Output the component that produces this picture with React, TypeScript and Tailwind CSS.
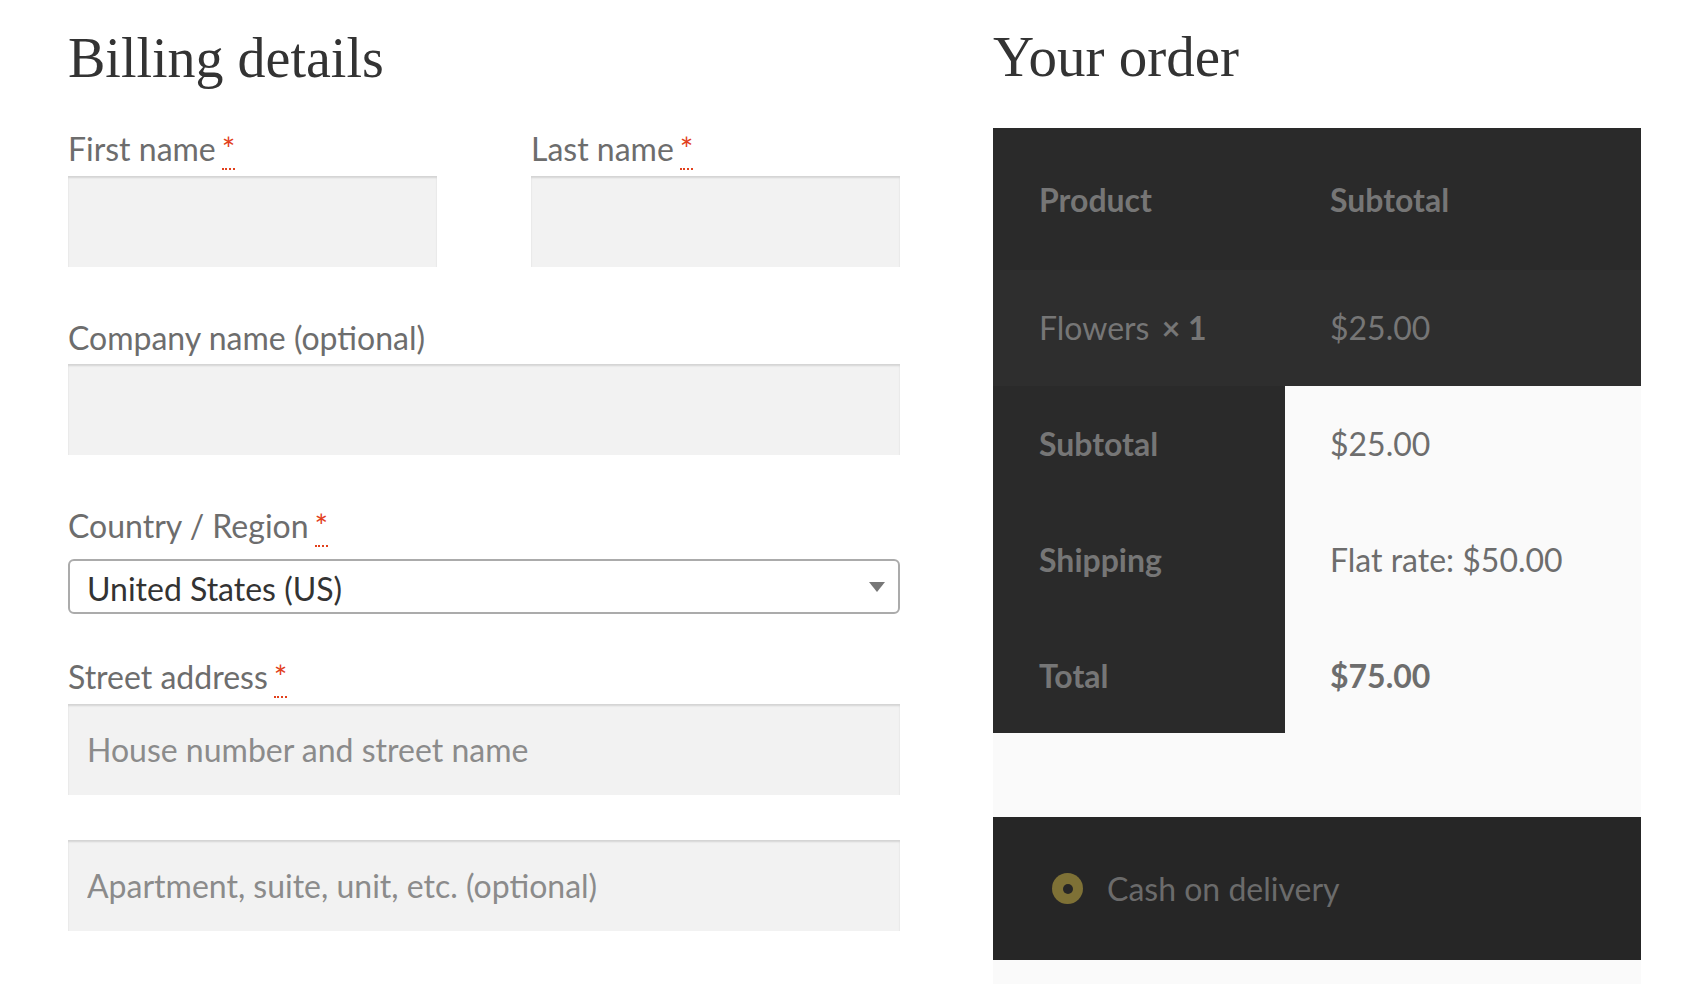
import React from 'react'

function Req() {
  return (
    <abbr
      title="required"
      className="ml-[6px] text-[#e2401c] no-underline border-b-2 border-dotted border-[#e2401c]"
    >
      *
    </abbr>
  )
}

function Label({ children, required }: { children: React.ReactNode; required?: boolean }) {
  return (
    <label className="block h-[38px] text-[32px] leading-[38px] text-[#6d6d6d]">
      {children}
      {required && <Req />}
    </label>
  )
}

function TextInput({ placeholder, className = '' }: { placeholder?: string; className?: string }) {
  return (
    <input
      type="text"
      placeholder={placeholder}
      className={`block h-[91px] w-full bg-[#f2f2f2] px-[19px] text-[32px] text-[#333] shadow-[inset_0_2px_2px_rgba(0,0,0,0.125)] outline-none placeholder:text-[#8b8b8b] ${className}`}
    />
  )
}

export default function App() {
  return (
    <div className="h-[984px] overflow-hidden bg-white font-['Lato','Noto_Sans',sans-serif]">
      <div className="flex pl-[68px] pt-[25px]">
        {/* Billing details */}
        <section className="w-[832px]">
          <h3 className="h-[67px] font-['Liberation_Serif',serif] text-[56px] leading-[67px] text-[#333]">
            Billing details
          </h3>

          <div className="mt-[38px] flex gap-[94px]">
            <div className="flex-1">
              <Label required>First name</Label>
              <TextInput className="mt-[8px]" />
            </div>
            <div className="flex-1">
              <Label required>Last name</Label>
              <TextInput className="mt-[8px]" />
            </div>
          </div>

          <div className="mt-[52px]">
            <Label>Company name (optional)</Label>
            <TextInput className="mt-[7px]" />
          </div>

          <div className="mt-[52px]">
            <Label required>Country / Region</Label>
            <div className="mt-[14px] flex h-[55px] items-center justify-between rounded-[6px] border-2 border-[#ababab] bg-white pl-[17px] pr-[13px]">
              <span className="mt-[5px] text-[32px] leading-[38px] text-[#333]">United States (US)</span>
              <svg width="16" height="10" viewBox="0 0 16 10">
                <path d="M0 0h16L8 10z" fill="#777" />
              </svg>
            </div>
          </div>

          <div className="mt-[44px]">
            <Label required>Street address</Label>
            <TextInput className="mt-[8px]" placeholder="House number and street name" />
            <TextInput className="mt-[45px]" placeholder="Apartment, suite, unit, etc. (optional)" />
          </div>
        </section>

        {/* Your order */}
        <section className="ml-[93px] flex h-[959px] w-[648px] flex-col">
          <h3 className="h-[67px] -mt-[2px] font-['Liberation_Serif',serif] text-[57px] leading-[67px] text-[#333]">
            Your order
          </h3>

          <div className="mt-[38px] flex-1 bg-[#fafafa]">
            <table className="w-full border-collapse text-left text-[32px] leading-[38px]">
              <thead className="bg-[#2a2a2a] text-[#767676]">
                <tr className="h-[142px]">
                  <th className="w-[292px] pl-[46px] pt-[2px] font-bold">Product</th>
                  <th className="pl-[45px] pt-[2px] font-bold">Subtotal</th>
                </tr>
              </thead>
              <tbody className="bg-[#2e2e2e] text-[#767676]">
                <tr className="h-[116px]">
                  <td className="pl-[46px]">
                    Flowers <strong className="ml-[4px] font-bold">×&nbsp;1</strong>
                  </td>
                  <td className="pl-[45px]">$25.00</td>
                </tr>
              </tbody>
              <tfoot>
                <tr className="h-[116px]">
                  <th className="bg-[#2a2a2a] pl-[46px] font-bold text-[#767676]">Subtotal</th>
                  <td className="pl-[45px] text-[#6d6d6d]">$25.00</td>
                </tr>
                <tr className="h-[116px]">
                  <th className="bg-[#2a2a2a] pl-[46px] font-bold text-[#767676]">Shipping</th>
                  <td className="pl-[45px] text-[#6d6d6d]">Flat rate: $50.00</td>
                </tr>
                <tr className="h-[115px]">
                  <th className="bg-[#2a2a2a] pl-[46px] font-bold text-[#767676]">Total</th>
                  <td className="pl-[45px] font-bold text-[#6d6d6d]">$75.00</td>
                </tr>
              </tfoot>
            </table>

            <div className="mt-[84px] flex h-[143px] items-center gap-[24px] bg-[#262626] pl-[59px]">
              <span className="flex h-[31px] w-[31px] items-center justify-center rounded-full bg-[#7e7136]">
                <span className="h-[10px] w-[10px] rounded-full bg-[#262626]" />
              </span>
              <span className="text-[32px] leading-[38px] text-[#6b6b6b]">Cash on delivery</span>
            </div>
          </div>
        </section>
      </div>
    </div>
  )
}
